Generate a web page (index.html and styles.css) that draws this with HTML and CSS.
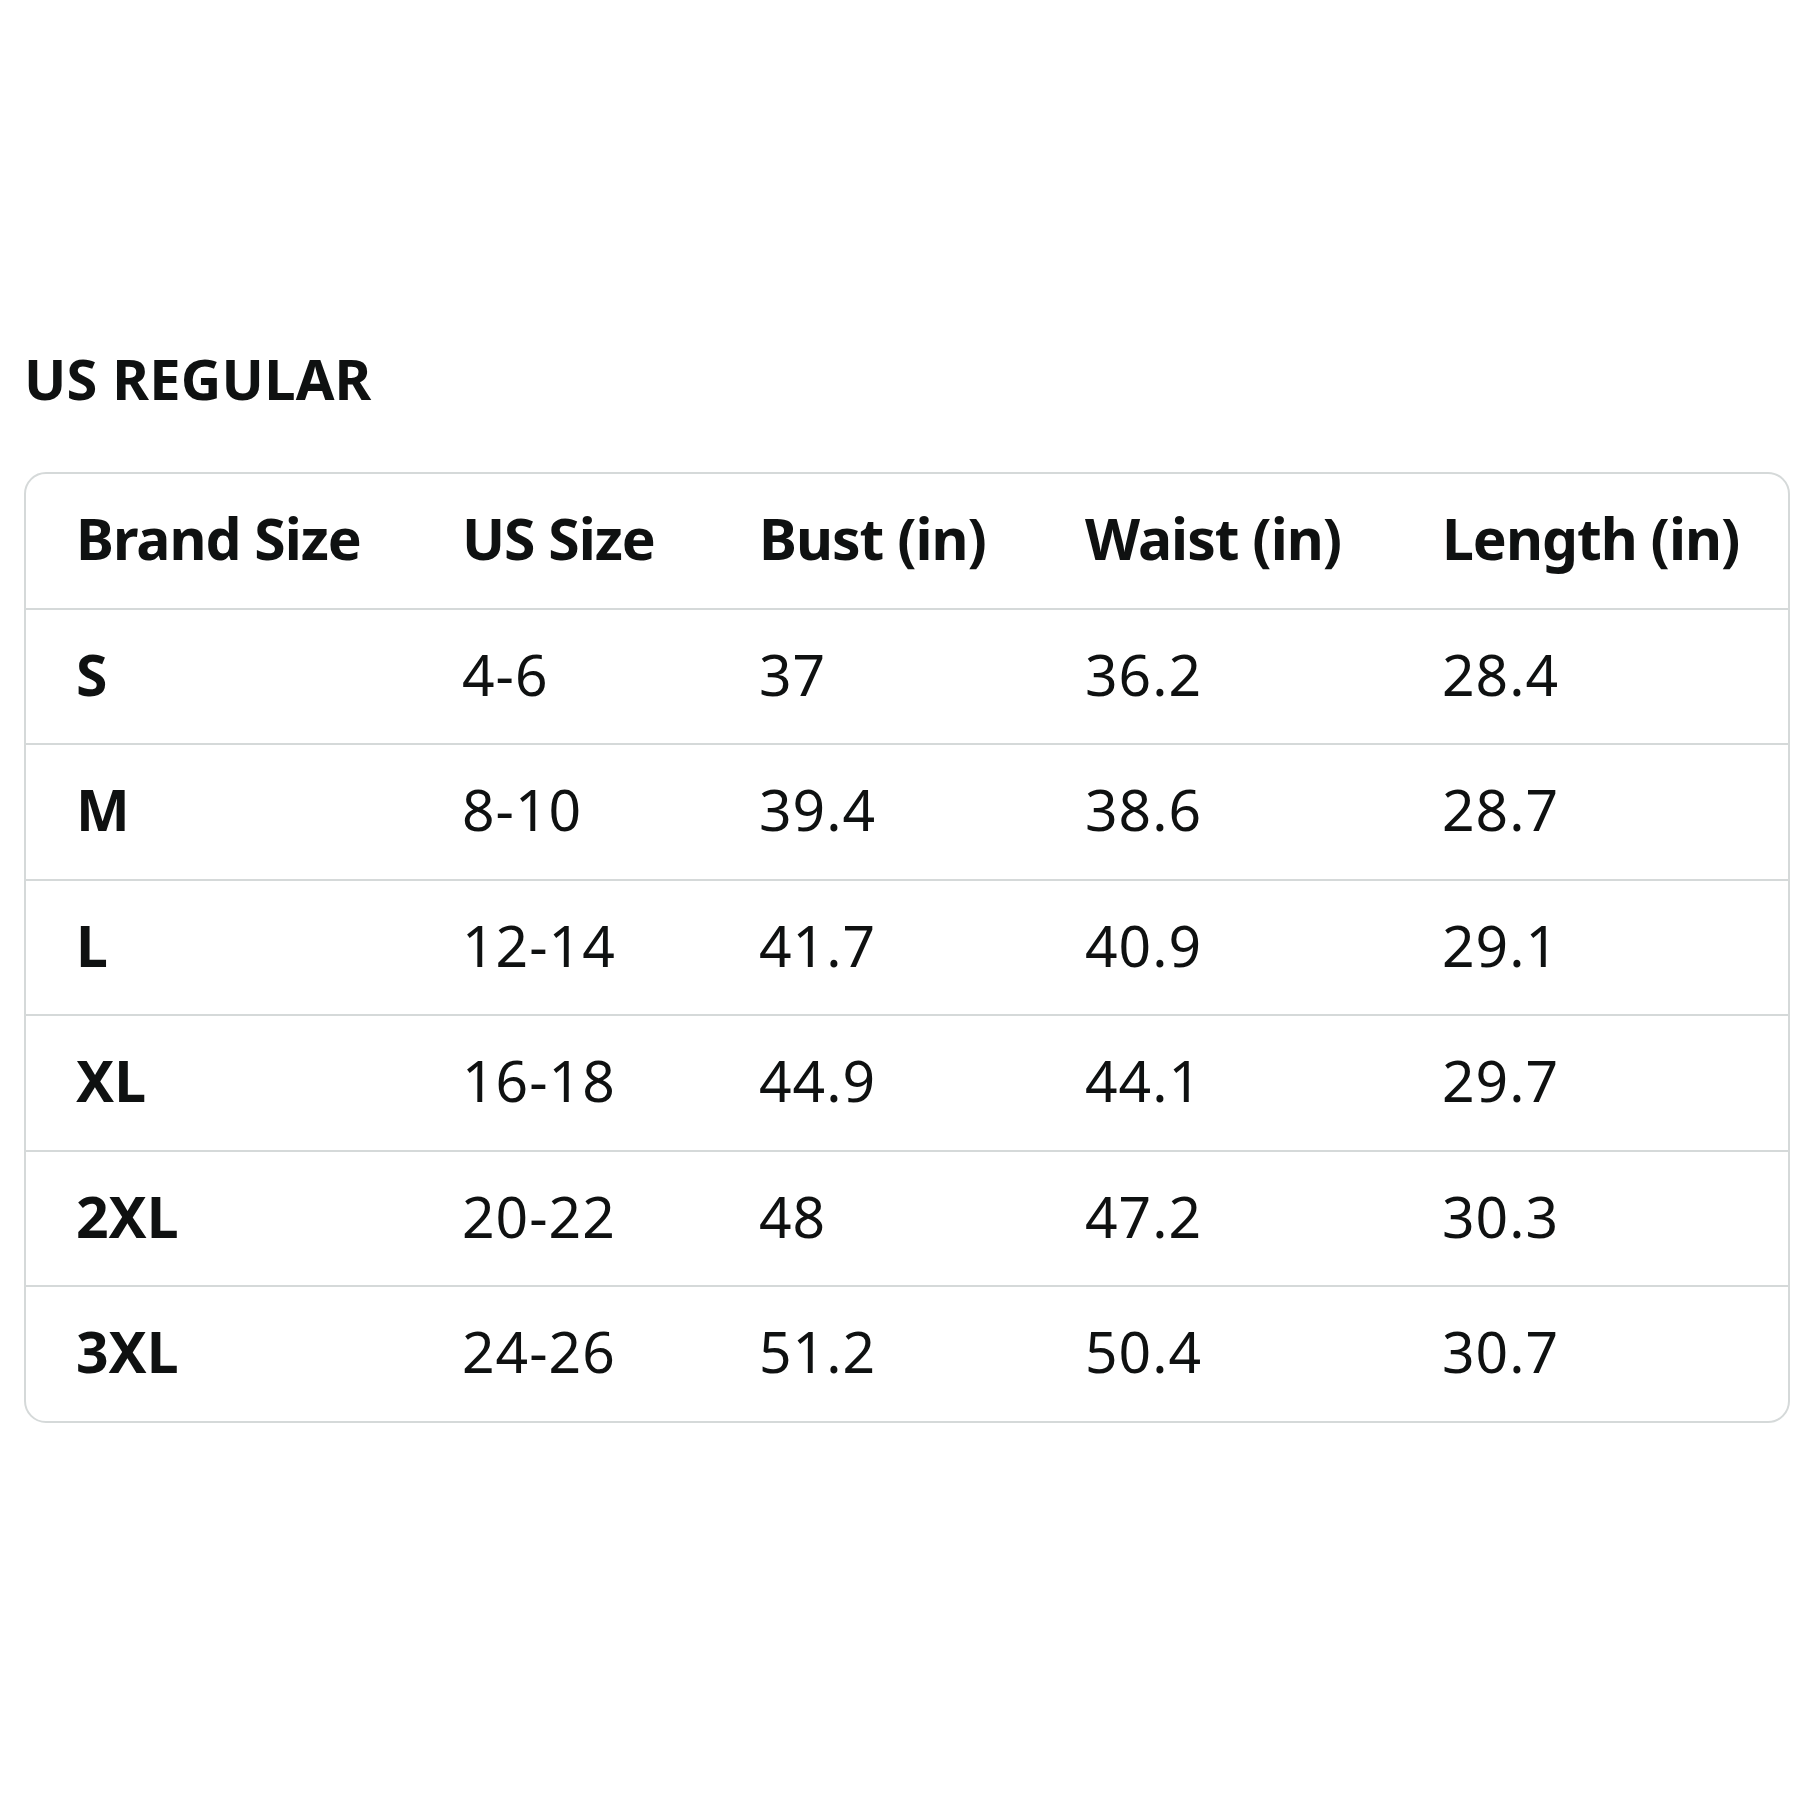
FILE: index.html
```html
<!DOCTYPE html>
<html lang="en">
<head>
<meta charset="utf-8">
<title>US Regular Size Chart</title>
<link rel="stylesheet" href="styles.css">
</head>
<body>
<main class="page">
  <h1 class="title">US REGULAR</h1>
  <div class="chart">
    <div class="row head">
      <div class="cell">Brand Size</div>
      <div class="cell">US Size</div>
      <div class="cell">Bust (in)</div>
      <div class="cell">Waist (in)</div>
      <div class="cell">Length (in)</div>
    </div>
    <div class="row">
      <div class="cell size">S</div>
      <div class="cell">4-6</div>
      <div class="cell">37</div>
      <div class="cell">36.2</div>
      <div class="cell">28.4</div>
    </div>
    <div class="row">
      <div class="cell size">M</div>
      <div class="cell">8-10</div>
      <div class="cell">39.4</div>
      <div class="cell">38.6</div>
      <div class="cell">28.7</div>
    </div>
    <div class="row">
      <div class="cell size">L</div>
      <div class="cell">12-14</div>
      <div class="cell">41.7</div>
      <div class="cell">40.9</div>
      <div class="cell">29.1</div>
    </div>
    <div class="row">
      <div class="cell size">XL</div>
      <div class="cell">16-18</div>
      <div class="cell">44.9</div>
      <div class="cell">44.1</div>
      <div class="cell">29.7</div>
    </div>
    <div class="row">
      <div class="cell size">2XL</div>
      <div class="cell">20-22</div>
      <div class="cell">48</div>
      <div class="cell">47.2</div>
      <div class="cell">30.3</div>
    </div>
    <div class="row">
      <div class="cell size">3XL</div>
      <div class="cell">24-26</div>
      <div class="cell">51.2</div>
      <div class="cell">50.4</div>
      <div class="cell">30.7</div>
    </div>
  </div>
</main>
</body>
</html>
```

FILE: styles.css
```css
html, body {
  margin: 0;
  padding: 0;
  background: #ffffff;
}

body {
  font-family: "Noto Sans", "Open Sans", Arial, sans-serif;
  color: #0f1111;
}

.page {
  width: 1766px;
  padding: 350px 0 0 24px;
}

.title {
  margin: 0 0 66px 0;
  font-size: 56px;
  line-height: 56px;
  font-weight: 700;
  letter-spacing: 0.2px;
}

.chart {
  border: 2px solid #d5d9d9;
  border-radius: 22px;
  overflow: hidden;
}

.row {
  display: grid;
  grid-template-columns: 386px 297px 326px 357px 1fr;
  align-items: center;
  box-sizing: border-box;
  height: 135.5px;
  padding: 0 0 4px 50px;
  border-bottom: 2px solid #d5d9d9;
  font-size: 57px;
  line-height: 57px;
  font-weight: 400;
}

.row:last-child {
  height: 133.5px;
  border-bottom: none;
}

.cell {
  white-space: nowrap;
  letter-spacing: 1px;
}

.head .cell,
.cell.size {
  font-weight: 700;
}

.head .cell {
  letter-spacing: -1px;
}

.cell.size {
  letter-spacing: 0;
}
```
